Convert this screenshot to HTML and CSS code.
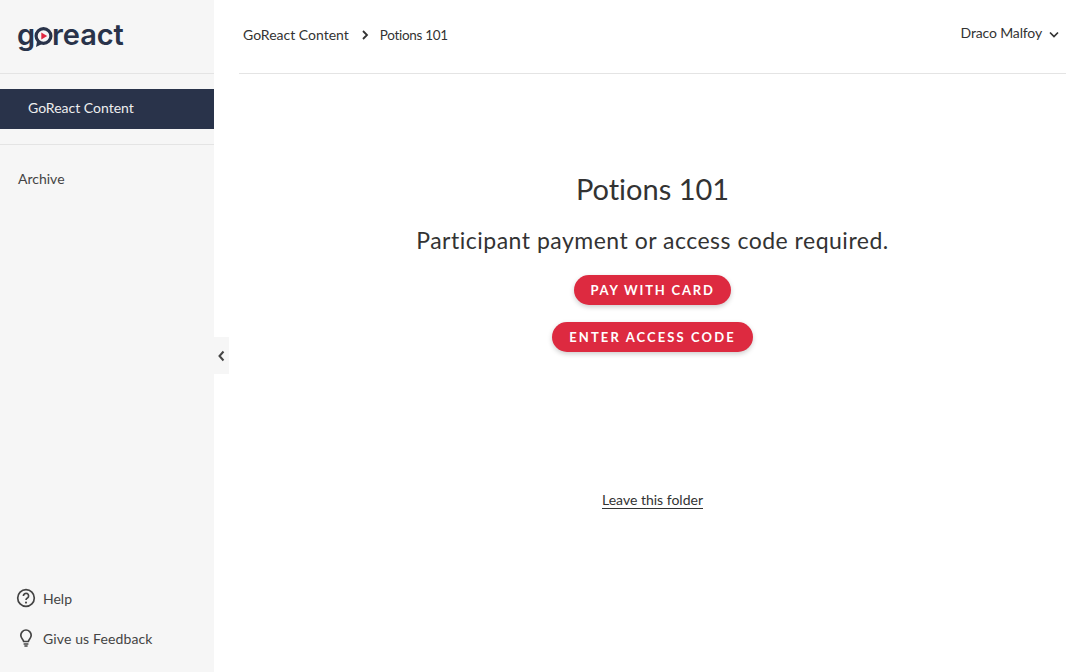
FILE: index.html
```html
<!DOCTYPE html>
<html lang="en">
<head>
<meta charset="utf-8">
<title>GoReact</title>
<link rel="stylesheet" href="styles.css">
</head>
<body>
<div class="app">
  <aside class="sidebar">
    <div class="logo-row">
      <div class="logo"><span>g</span><svg class="logo-o" width="19" height="22" viewBox="0 0 19 22"><circle cx="9.500" cy="10" r="7.400" fill="none" stroke="#29334a" stroke-width="3.200"/><path d="M3 15.500 L2 21 L8 18z" fill="#29334a"/><path d="M7.300 6.600 L13.200 10 L7.300 13.400z" fill="#e0263f"/></svg><span>react</span></div>
    </div>
    <nav class="nav-main"><a class="nav-active">GoReact Content</a></nav>
    <div class="nav-second"><a class="nav-link">Archive</a></div>
    <div class="nav-bottom">
      <a class="nav-foot">
        <svg class="foot-icon" width="20" height="20" viewBox="0 0 20 20"><circle cx="10" cy="10" r="8.300" fill="none" stroke="#444" stroke-width="1.700"/><path d="M7.400 8a2.600 2.600 0 1 1 4 2.100c-1 .6-1.400 1-1.400 2" fill="none" stroke="#444" stroke-width="1.700"/><circle cx="10" cy="14.600" r="1.050" fill="#444"/></svg>
        <span>Help</span>
      </a>
      <a class="nav-foot">
        <svg class="foot-icon" width="20" height="20" viewBox="0 0 20 20"><path d="M7.600 13.500c0-2-2.800-3-2.800-6.300a5.200 5.200 0 0 1 10.400 0C15.200 10.500 12.400 11.500 12.400 13.500z" fill="none" stroke="#444" stroke-width="1.700" stroke-linejoin="round"/><path d="M7.600 15.900h4.800M8.400 18h3.200" stroke="#444" stroke-width="1.500" fill="none"/></svg>
        <span class="foot-wide">Give us Feedback</span>
      </a>
    </div>
    <button class="collapse" aria-label="Collapse"><svg width="8" height="12" viewBox="0 0 8 12"><path d="M5.500 1.500 L1.500 6 L5.500 10.500" fill="none" stroke="#444" stroke-width="2"/></svg></button>
  </aside>
  <main class="main">
    <header class="topbar">
      <div class="crumbs">
        <span>GoReact Content</span>
        <svg class="crumb-sep" width="8" height="10" viewBox="0 0 8 10"><path d="M2 1 L6 5 L2 9" fill="none" stroke="#333" stroke-width="1.800"/></svg>
        <span class="crumb-last">Potions 101</span>
      </div>
      <div class="user"><span class="user-name">Draco Malfoy</span><svg class="user-caret" width="10" height="7" viewBox="0 0 10 7"><path d="M1 1.500 L5 5.500 L9 1.500" fill="none" stroke="#333" stroke-width="1.700"/></svg></div>
    </header>
    <section class="content">
      <h1>Potions 101</h1>
      <p class="lead">Participant payment or access code required.</p>
      <button class="btn btn-pay">PAY WITH CARD</button>
      <button class="btn btn-code">ENTER ACCESS CODE</button>
      <a class="leave">Leave this folder</a>
    </section>
  </main>
</div>
</body>
</html>
```
FILE: styles.css
```css
* { box-sizing: border-box; }
html, body { margin: 0; height: 100%; }
body { background: #fff; color: #333; font-family: "Lato", "Liberation Sans", sans-serif; font-size: 14px; overflow: hidden; font-variant-ligatures: none; }
a { color: inherit; }
.app { display: flex; width: 1089px; height: 672px; }
.sidebar { position: relative; width: 214px; flex: none; background: #f6f6f6; display: flex; flex-direction: column; }
.logo-row { height: 74px; border-bottom: 1px solid #e4e4e4; padding: 20px 0 0 17px; }
.logo { display: flex; align-items: flex-start; color: #29334a; font-family: "Inter", sans-serif; font-weight: 600; font-size: 29px; line-height: 30px; letter-spacing: -0.1px; }
.logo-o { margin: 6px -1px 0 -1px; }
.nav-main { padding: 15px 0; border-bottom: 1px solid #e4e4e4; }
.nav-active { display: flex; align-items: center; height: 40px; padding: 0 0 3px 28px; background: #29334a; color: #eee; }
.nav-second { padding: 26px 0 0 18px; }
.nav-link { color: #444; line-height: 16px; display: block; }
.nav-bottom { margin-top: auto; padding: 0 0 24px 16px; display: flex; flex-direction: column; gap: 20px; }
.nav-foot { display: flex; align-items: center; gap: 7px; height: 20px; color: #444; }
.foot-wide { letter-spacing: 0.13px; }
.collapse { position: absolute; left: 214px; top: 337px; width: 15px; height: 37px; background: #f6f6f6; border: 0; padding: 0; display: flex; align-items: center; justify-content: center; }
.main { flex: none; width: 852px; padding-left: 25px; display: flex; flex-direction: column; }
.topbar { height: 74px; border-bottom: 1px solid #e4e4e4; display: flex; justify-content: space-between; padding: 0 7px 0 4px; }
.crumbs { display: flex; align-items: center; gap: 12px; height: 69px; color: #333; }
.crumb-last { font-size: 13.5px; letter-spacing: -0.3px; margin-left: -1px; }
.user { display: flex; align-items: center; gap: 7px; height: 65px; color: #333; }
.user-name { letter-spacing: -0.15px; }
.user-caret { margin-top: 4px; }
.content { display: flex; flex-direction: column; align-items: center; padding-top: 97px; }
h1 { margin: 0; font-weight: 400; font-size: 29px; line-height: 36px; color: #333; }
.lead { margin: 16px 0 0; font-size: 23px; letter-spacing: 0.5px; line-height: 34px; color: #333; }
.btn { border: 0; border-radius: 15px; height: 30px; background: #dd2a40; color: #fff; font-family: inherit; font-weight: 700; font-size: 13px; box-shadow: 0 2px 5px rgba(0,0,0,.2); padding: 0; }
.btn-pay { margin-top: 18px; width: 157px; letter-spacing: 1.8px; }
.btn-code { margin-top: 17px; width: 201px; letter-spacing: 2.1px; }
.leave { margin-top: 139px; line-height: 17px; border-bottom: 1px solid #333; font-size: 14px; }
```
